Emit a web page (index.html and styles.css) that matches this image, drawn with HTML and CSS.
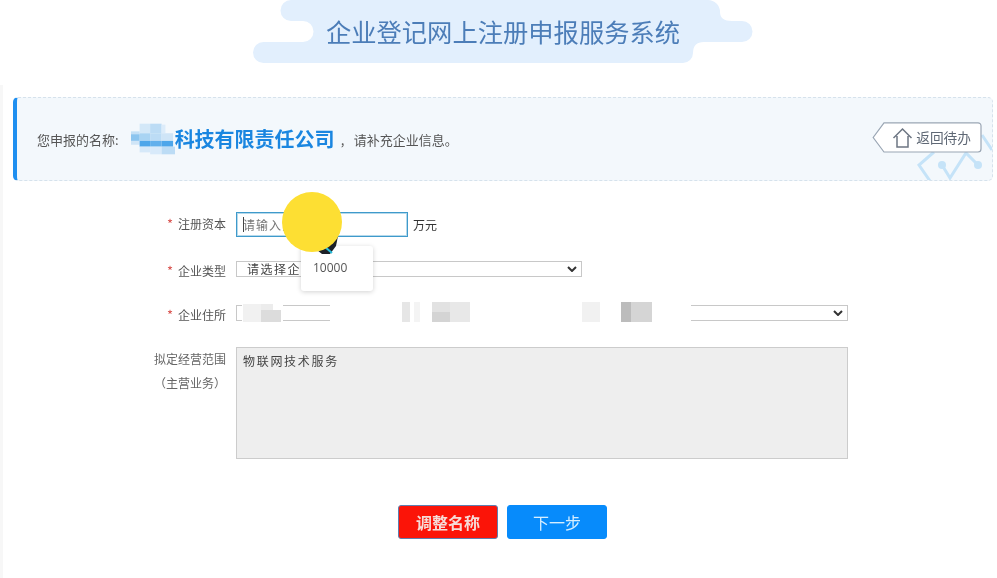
FILE: index.html
```html
<!DOCTYPE html>
<html lang="zh-CN">
<head>
<meta charset="utf-8">
<title>企业登记网上注册申报服务系统</title>
<link rel="stylesheet" href="styles.css">
</head>
<body>
<div class="page">
  <header class="top">
    <svg class="cloud" viewBox="0 0 997 63" aria-hidden="true">
      <path d="M291 0H708a12 12 0 0 1 12 12q0 9 12 9h10a10.500 10.500 0 0 1 0 21H704q-11 0-11 11a10 10 0 0 1-10 10H263.500a10.500 10.500 0 0 1 0-21H303a10.500 10.500 0 0 0 0-21H291a10.500 10.500 0 0 1 0-21z" fill="#e2effd"/>
    </svg>
    <h1 class="title">企业登记网上注册申报服务系统</h1>
  </header>

  <main class="main">
  <section class="banner">
    <div class="notice">
      <span class="notice-label">您申报的名称:</span>
      <span class="name-mask">
        <svg viewBox="0 0 46 32" width="46" height="32" aria-hidden="true">
          <rect x="9" y="0" width="11" height="10" fill="#d3e8f8"/>
          <rect x="20" y="0" width="12" height="10" fill="#bcdcf5"/>
          <rect x="32" y="1" width="4" height="9" fill="#dcecfa"/>
          <rect x="0" y="8" width="9" height="3" fill="#c4e0f6"/>
          <rect x="9" y="10" width="11" height="8" fill="#a9d4f3"/>
          <rect x="20" y="10" width="12" height="8" fill="#bcdcf5"/>
          <rect x="32" y="10" width="12" height="8" fill="#cfe5f7"/>
          <rect x="0" y="11" width="9" height="7" fill="#8cc5ef"/>
          <rect x="0" y="18" width="9" height="4" fill="#cfe5f7"/>
          <rect x="9" y="18" width="11" height="6" fill="#4da6ea"/>
          <rect x="20" y="18" width="12" height="6" fill="#62b0ec"/>
          <rect x="32" y="18" width="12" height="6" fill="#4da6ea"/>
          <rect x="9" y="24" width="11" height="6" fill="#d6e9f9"/>
          <rect x="20" y="24" width="12" height="8" fill="#d8eafa"/>
          <rect x="32" y="24" width="14" height="8" fill="#bcdcf5"/>
        </svg>
      </span>
      <strong class="company">科技有限责任公司</strong>
      <span class="comma">,</span>
      <span class="notice-tip">请补充企业信息。</span>
    </div>
    <svg class="circuit" viewBox="0 0 80 50" aria-hidden="true">
      <path d="M22 22L7 35l11 16M30 35l8 13 16-25 12 12M70 5l10 15" fill="none" stroke="#c5e3f8" stroke-width="3"/>
      <circle cx="30" cy="35" r="4" fill="#c5e3f8"/>
      <circle cx="66" cy="35" r="4" fill="#c5e3f8"/>
    </svg>
    <a class="back" href="#">
      <svg class="back-shape" viewBox="0 0 110 31" aria-hidden="true">
        <path d="M12 .8H106a3 3 0 0 1 3 3V27a3 3 0 0 1-3 3H12L1.200 15.500z" fill="#fff" stroke="#9aa6b4" stroke-width="1.200"/>
        <path d="M21.500 16l9-9 9 9M25 14V25h11V14" fill="none" stroke="#6d7683" stroke-width="1.500"/>
      </svg>
      <span class="back-text">返回待办</span>
    </a>
  </section>

  <form class="form">
    <div class="row">
      <label class="label label-high"><em class="req">*</em>注册资本</label>
      <input class="capital" type="text" placeholder="请输入注册资本">
      <span class="unit">万元</span>
      <span class="caret"></span>
      <div class="suggest">10000</div>
      <svg class="pointer" viewBox="0 0 30 30" aria-hidden="true">
        <path d="M3 21L14 9l10-2-2 10-6 8H8z" fill="#1d2127"/>
        <path d="M11 18l7 6" stroke="#27c1e0" stroke-width="2"/>
      </svg>
      <span class="spot"></span>
    </div>
    <div class="row">
      <label class="label label-low"><em class="req">*</em>企业类型</label>
      <div class="select select-type">
        <span class="select-text">请选择企业类型</span>
        <svg class="chevron" viewBox="0 0 10 6" aria-hidden="true"><path d="M1 1l4 4 4-4" fill="none" stroke="#333" stroke-width="2"/></svg>
      </div>
    </div>
    <div class="row row-address">
      <label class="label label-low"><em class="req">*</em>企业住所</label>
      <div class="select select-address">
        <span class="select-text"></span>
        <svg class="chevron" viewBox="0 0 10 6" aria-hidden="true"><path d="M1 1l4 4 4-4" fill="none" stroke="#333" stroke-width="2"/></svg>
      </div>
      <svg class="addr-mask" viewBox="0 0 455 20" aria-hidden="true">
        <rect x="6" width="41" height="20" fill="#fff"/>
        <rect x="94" width="361" height="20" fill="#fff"/>
        <rect x="7" y="2" width="18" height="18" fill="#f1f1f1"/>
        <rect x="25" y="2" width="12" height="6" fill="#ececec"/>
        <rect x="25" y="8" width="20" height="12" fill="#dcdcdc"/>
        <rect x="166" y="0" width="8" height="20" fill="#e6e6e6"/>
        <rect x="178" y="0" width="6" height="20" fill="#f4f4f4"/>
        <rect x="196" y="0" width="18" height="10" fill="#e2e2e2"/>
        <rect x="196" y="10" width="18" height="10" fill="#d4d4d4"/>
        <rect x="214" y="0" width="20" height="20" fill="#e8e8e8"/>
        <rect x="346" y="0" width="18" height="20" fill="#f1f1f1"/>
        <rect x="385" y="0" width="10" height="20" fill="#bcbcbc"/>
        <rect x="395" y="0" width="21" height="20" fill="#d5d5d5"/>
      </svg>
    </div>
    <div class="row row-scope">
      <label class="label label-scope">拟定经营范围<br>（主营业务）</label>
      <textarea class="scope" disabled>物联网技术服务</textarea>
    </div>
    <div class="actions">
      <button class="btn btn-red" type="button">调整名称</button>
      <button class="btn btn-blue" type="button">下一步</button>
    </div>
  </form>
  </main>
</div>
</body>
</html>
```
FILE: styles.css
```css
* { box-sizing: border-box; }
html, body { margin: 0; padding: 0; background: #fff; }
body {
  width: 997px;
  height: 578px;
  overflow: hidden;
  font-family: "Noto Sans CJK SC", "Liberation Sans", sans-serif;
  color: #555;
}
.page { display: flex; flex-direction: column; filter: blur(0.4px); }

.top {
  position: relative;
  height: 63px;
  display: flex;
  justify-content: center;
  align-items: center;
}
.cloud { position: absolute; left: 0; top: 0; width: 997px; height: 63px; }
.title {
  position: relative;
  margin: 0 0 1px 9px;
  font-size: 25.300px;
  line-height: 36px;
  font-weight: 400;
  color: #4c7db8;
  white-space: nowrap;
}

.main {
  margin-top: 22px;
  padding-top: 12px;
  height: 493px;
  border-left: 3px solid #f7f7f7;
}

.banner {
  position: relative;
  margin: 0 4px 0 10px;
  height: 84px;
  display: flex;
  align-items: center;
  justify-content: space-between;
  padding: 0 10px 0 20px;
  background: #f3f8fc;
  border: 1px dashed #d6e2ec;
  border-left: 4px solid #1f8ff0;
  border-radius: 5px;
  overflow: hidden;
}
.notice { display: flex; align-items: center; position: relative; z-index: 1; white-space: nowrap; }
.notice-label, .notice-tip { font-size: 13px; color: #555; }
.name-mask { display: flex; margin-left: 12px; width: 44px; overflow: visible; }
.company { font-size: 20px; font-weight: 700; color: #1a86e0; line-height: 28px; }
.comma { font-size: 13px; width: 19px; padding-left: 6px; color: #555; }

.back {
  position: relative;
  z-index: 1;
  display: flex;
  align-items: center;
  justify-content: flex-end;
  width: 110px;
  height: 31px;
  padding-right: 11px;
  margin-top: -4px;
  text-decoration: none;
}
.back-shape { position: absolute; left: 0; top: 0; width: 110px; height: 31px; }
.back-text { position: relative; font-size: 13.700px; color: #5f6875; }
.circuit { position: absolute; right: 0; bottom: 0; width: 80px; height: 50px; }

.form { display: flex; flex-direction: column; padding-top: 31px; }
.row { position: relative; display: flex; align-items: center; height: 25px; margin-bottom: 19px; margin-left: -3px; }
.label {
  flex: none;
  width: 226px;
  margin-right: 10px;
  text-align: right;
  font-size: 12px;
  color: #555;
}
.label-low { padding-top: 3px; }
.label-high { padding-bottom: 2px; }
.req { font-style: normal; font-size: 13px; color: #d9534f; margin-right: 5px; }
.capital {
  width: 172px;
  height: 25px;
  padding: 0 6px;
  font: 12px "Noto Sans CJK SC", sans-serif;
  letter-spacing: 1px;
  border: 1px solid #3f9acb;
  box-shadow: inset 0 0 0 1px rgba(90, 170, 210, .45);
  border-radius: 0;
  outline: none;
  background: #fff;
}
.capital::placeholder { color: #777; opacity: 1; }
.caret { position: absolute; left: 243px; top: 5px; width: 1px; height: 15px; background: #444; }
.unit { margin-left: 5px; font-size: 12px; color: #333; }
.suggest {
  position: absolute;
  left: 301px;
  top: 34px;
  width: 72px;
  height: 45px;
  padding-left: 12px;
  font: 12px/44px "Open Sans", "Liberation Sans", sans-serif;
  color: #555;
  background: #fff;
  border-radius: 3px;
  box-shadow: 0 1px 5px rgba(0, 0, 0, .18);
  z-index: 2;
}
.pointer { position: absolute; left: 314px; top: 17px; width: 30px; height: 30px; z-index: 3; }
.spot {
  position: absolute;
  left: 282px;
  top: -20px;
  width: 60px;
  height: 60px;
  border-radius: 50%;
  background: #fddf33;
  z-index: 4;
}
.select {
  display: flex;
  align-items: center;
  justify-content: space-between;
  height: 16px;
  padding: 0 4px 0 10px;
  background: #fff;
  border: 1px solid #c8c8c8;
}
.select-text { font-size: 12px; line-height: 14px; letter-spacing: 1.500px; color: #444; }
.chevron { width: 10px; height: 6px; flex: none; }
.select-type { width: 346px; }
.select-address { width: 612px; }
.row-address { margin-bottom: 22px; }
.addr-mask { position: absolute; left: 236px; top: 2px; width: 455px; height: 20px; }
.row-scope { height: 112px; align-items: flex-start; margin-bottom: 46px; }
.label-scope { line-height: 24px; color: #666; }
.scope {
  width: 612px;
  height: 112px;
  padding: 4px 6px;
  font: 12px/18px "Noto Sans CJK SC", sans-serif;
  letter-spacing: 1.700px;
  color: #444;
  background: #eee;
  border: 1px solid #ccc;
  resize: none;
  opacity: 1;
  -webkit-text-fill-color: #444;
}
.actions { display: flex; justify-content: center; gap: 9px; margin-left: 5px; }
.btn {
  width: 100px;
  height: 34px;
  padding: 0;
  font: 16px "Noto Sans CJK SC", sans-serif;
  border-radius: 3px;
  cursor: pointer;
}
.btn-red { background: #fb1408; color: #f6dcd8; border: 1px solid #5e7fb0; font-weight: 700; }
.btn-blue { background: #078bfb; color: #d6eeff; border: 1px solid #078bfb; }
```
